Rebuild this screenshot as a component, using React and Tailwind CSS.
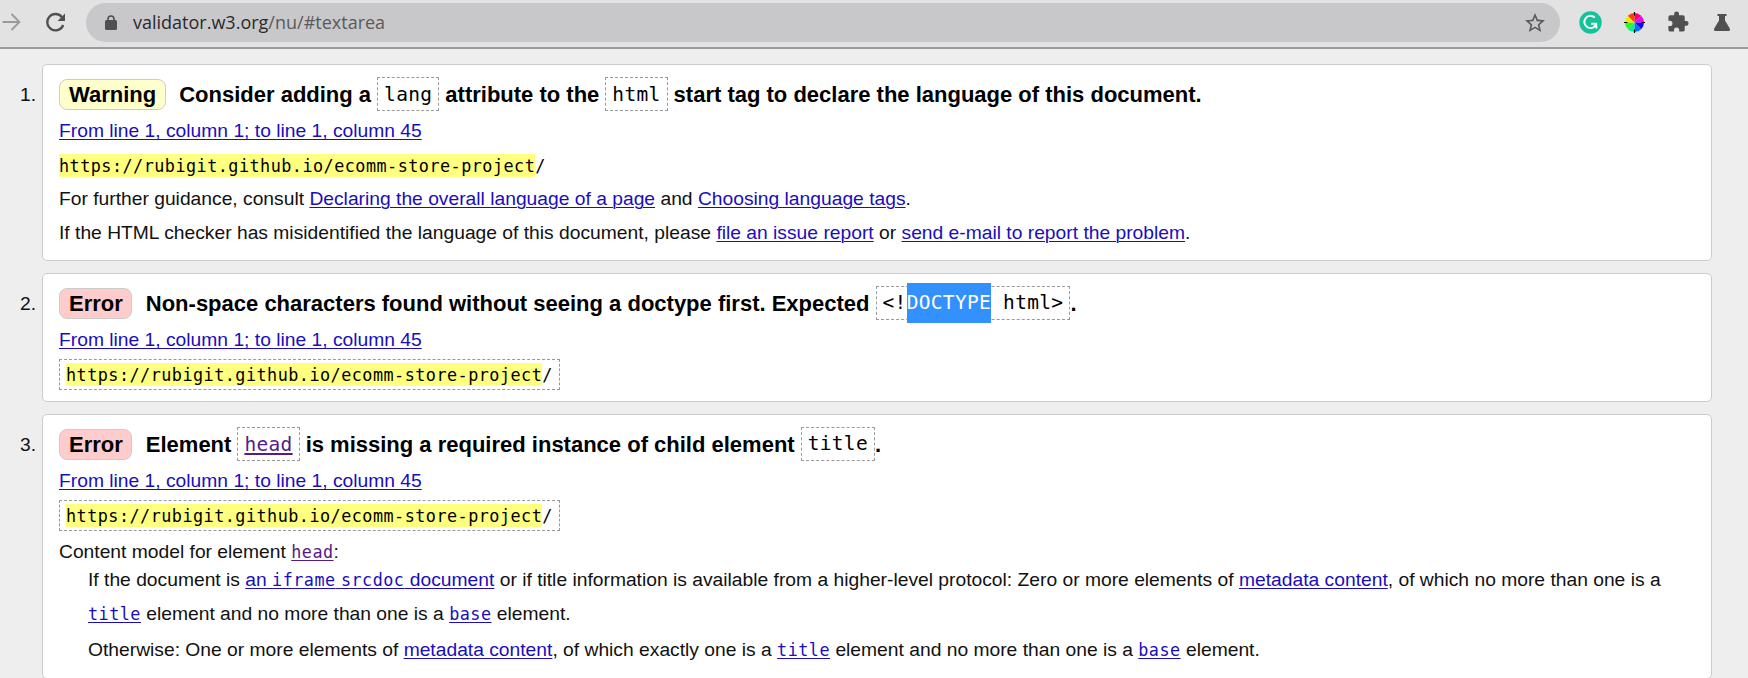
function Link({ children, visited = false, className = "decoration-1" }) {
  return (
    <a
      className={
        "underline underline-offset-[1.5px] " +
        className +
        (visited ? " text-[#551a8b]" : " text-[#1a0dbd]")
      }
    >
      {children}
    </a>
  );
}

function Mono({ children }) {
  return (
    <code className="font-['DejaVu_Sans_Mono',monospace] text-[16.8px] leading-none tracking-[0.48px]">
      {children}
    </code>
  );
}

function HeadCode({ children }) {
  return (
    <code className="inline-flex h-[34px] items-center whitespace-pre border border-dashed border-[#999] px-[6px] pt-px font-['DejaVu_Sans_Mono',monospace] text-[19.5px] font-normal leading-none tracking-[0.32px]">
      {children}
    </code>
  );
}

function Badge({ kind }) {
  return (
    <strong
      className={
        "mr-[13.5px] flex h-[31px] items-center rounded-[8px] border border-[#ccc] pl-[9px] pr-[8.5px] " +
        (kind === "Warning" ? "bg-[#ffffcc]" : "bg-[#ffcccc]")
      }
    >
      {kind}
    </strong>
  );
}

function Heading({ kind, children }) {
  return (
    <div className="flex h-[37px] items-start text-[22px] font-bold leading-[35px] text-black">
      <div className="flex h-[34px] items-center">
        <Badge kind={kind} />
        <div className="flex items-center gap-[6px] whitespace-pre">{children}</div>
      </div>
    </div>
  );
}

function Row({ children, className = "h-[34px]" }) {
  return <div className={"whitespace-nowrap leading-[34px] " + className}>{children}</div>;
}

function Location() {
  return (
    <Row>
      <Link>From line 1, column 1; to line 1, column 45</Link>
    </Row>
  );
}

function Extract({ boxed = false }) {
  return (
    <div className="flex h-[34px] items-center">
      <code
        className={
          "flex items-center font-['DejaVu_Sans_Mono',monospace] text-[16.8px] leading-[23px] tracking-[0.48px] text-black " +
          (boxed ? "h-[31px] border border-dashed border-[#999] px-[6px]" : "")
        }
      >
        <span className="h-[23px] bg-[#ffff80] leading-[24px]">
          https://rubigit.github.io/ecomm-store-project
        </span>
        <span className="h-[23px] leading-[24px]">/</span>
      </code>
    </div>
  );
}

function Card({ n, className, children }) {
  return (
    <li className="flex">
      <span className="w-[42px] pr-[6px] pt-[14px] text-right leading-[34px]">{n}.</span>
      <div
        className={
          "w-[1670px] rounded-[5px] border border-[#ccc] bg-white pl-[16px] pt-[12px] " + className
        }
      >
        {children}
      </div>
    </li>
  );
}

function Toolbar() {
  return (
    <header className="flex h-[49px] items-start border-b-2 border-[#9b9b9b] bg-[#e2e2e2]">
      <div className="flex h-[45px] w-[86px] items-center">
        <svg width="86" height="45" viewBox="0 0 86 45" fill="none">
          <path d="M2.500 22H19.500M11.500 14L19.500 22L11.500 30" stroke="#9a9a9a" strokeWidth="1.800" />
          <path d="M62 17.200A8.200 8.200 0 1 0 63.200 25" stroke="#505050" strokeWidth="2.300" />
          <path d="M65 13.500V21H57.500Z" fill="#505050" />
        </svg>
      </div>
      <div className="mt-[3px] flex h-[39px] w-[1474px] items-center rounded-full bg-[#c8c8ca] pl-[19px]">
        <svg width="12" height="16" viewBox="0 0 12 16">
          <rect x="0" y="5" width="12" height="10" rx="1.500" fill="#505050" />
          <path d="M3 6V4a3 3 0 0 1 6 0V6" fill="none" stroke="#505050" strokeWidth="1.600" />
        </svg>
        <span className="ml-[16px] font-['Open_Sans',sans-serif] text-[18px] text-[#2a2a2a]">
          validator.w3.org<span className="text-[#5a5a5a]">/nu/#textarea</span>
        </span>
        <svg className="ml-auto mr-[13px]" width="24" height="24" viewBox="0 0 24 24">
          <path
            d="M22 9.240l-7.190-.62L12 2 9.190 8.630 2 9.240l5.460 4.730L5.820 21 12 17.270 18.180 21l-1.630-7.030L22 9.240zM12 15.400l-3.760 2.270 1-4.280-3.320-2.880 4.380-.38L12 6.100l1.710 4.040 4.380.38-3.320 2.880 1 4.280L12 15.400z"
            fill="#5a5a5a"
          />
        </svg>
      </div>
      <div className="flex h-[45px] w-[188px] items-center">
        <svg width="188" height="45" viewBox="0 0 188 45">
          <circle cx="30.500" cy="22.500" r="11.200" fill="#15c39a" />
          <path
            d="M34.800 17.600A6.100 6.100 0 1 0 36.300 23.800"
            fill="none"
            stroke="#fff"
            strokeWidth="1.900"
          />
          <path d="M31.200 23.800H36.300V28.600" fill="none" stroke="#fff" strokeWidth="1.900" />
          <g transform="translate(74.500 22.500)">
            <path d="M0 0V-9.500A9.500 9.500 0 0 1 6.700-6.700Z" fill="#ff0070" />
            <path d="M0 0L6.700-6.700A9.500 9.500 0 0 1 9.500 0Z" fill="#f000ff" />
            <path d="M0 0H9.500A9.500 9.500 0 0 1 6.700 6.700Z" fill="#2000ff" />
            <path d="M0 0L6.700 6.700A9.500 9.500 0 0 1 0 9.500Z" fill="#0070ff" />
            <path d="M0 0V9.500A9.500 9.500 0 0 1-6.700 6.700Z" fill="#00f0a0" />
            <path d="M0 0L-6.700 6.700A9.500 9.500 0 0 1-9.500 0Z" fill="#20ff20" />
            <path d="M0 0H-9.500A9.500 9.500 0 0 1-6.700-6.700Z" fill="#e8f000" />
            <path d="M0 0L-6.700-6.700A9.500 9.500 0 0 1 0-9.500Z" fill="#ff4000" />
            <path d="M0-10.500V-7M0 10.500V7M-10.500 0H-7M10.500 0H7" stroke="#000" strokeWidth="1.100" />
          </g>
          <path
            transform="translate(106.500 10.500) scale(.96)"
            d="M20.500 11H19V7c0-1.100-.9-2-2-2h-4V3.500a2.500 2.500 0 0 0-5 0V5H4c-1.100 0-2 .9-2 2v3.800h1.500a2.700 2.700 0 0 1 0 5.400H2V20c0 1.100.9 2 2 2h3.800v-1.500a2.700 2.700 0 0 1 5.400 0V22H17c1.100 0 2-.9 2-2v-4h1.500a2.500 2.500 0 0 0 0-5z"
            fill="#505050"
          />
          <path
            d="M157.500 14H166.500V16H165V20.500L169.800 28.500Q170.500 31 168.500 31H155.500Q153.500 31 154.200 28.500L159 20.500V16H157.500Z"
            fill="#505050"
          />
        </svg>
      </div>
    </header>
  );
}

export default function App() {
  return (
    <div className="h-[678px] w-[1748px] overflow-hidden bg-[#eee] font-['Liberation_Sans',Arial,sans-serif] text-[19.26px] text-[#111]">
      <Toolbar />
      <ol className="flex flex-col gap-[12px] pt-[15px]">
        <Card n={1} className="h-[197px]">
          <Heading kind="Warning">
            <span>Consider adding a</span>
            <HeadCode>lang</HeadCode>
            <span>attribute to the</span>
            <HeadCode>html</HeadCode>
            <span>start tag to declare the language of this document.</span>
          </Heading>
          <Location />
          <Extract />
          <Row>
            For further guidance, consult <Link>Declaring the overall language of a page</Link> and{" "}
            <Link>Choosing language tags</Link>.
          </Row>
          <Row>
            If the HTML checker has misidentified the language of this document, please{" "}
            <Link>file an issue report</Link> or <Link>send e-mail to report the problem</Link>.
          </Row>
        </Card>
        <Card n={2} className="h-[129px]">
          <Heading kind="Error">
            <span>Non-space characters found without seeing a doctype first. Expected</span>
            <span className="flex">
              <HeadCode>
                &lt;!
                <span className="flex h-[40px] items-center bg-[#3390ff] text-white">DOCTYPE</span> html&gt;
              </HeadCode>
              .
            </span>
          </Heading>
          <Location />
          <Extract boxed />
        </Card>
        <Card n={3} className="h-[265px]">
          <Heading kind="Error">
            <span>Element</span>
            <HeadCode>
              <Link visited className="decoration-2">
                head
              </Link>
            </HeadCode>
            <span>is missing a required instance of child element</span>
            <span className="flex">
              <HeadCode>title</HeadCode>.
            </span>
          </Heading>
          <Location />
          <Extract boxed />
          <Row className="mt-[3px] h-[28px]">
            Content model for element{" "}
            <Link visited>
              <Mono>head</Mono>
            </Link>
            :
          </Row>
          <div className="pl-[29px]">
            <Row>
              If the document is{" "}
              <Link>
                an <Mono>iframe</Mono> <Mono>srcdoc</Mono> document
              </Link>{" "}
              or if title information is available from a higher-level protocol: Zero or more elements
              of <Link>metadata content</Link>, of which no more than one is a
            </Row>
            <Row className="h-[36px]">
              <Link>
                <Mono>title</Mono>
              </Link>{" "}
              element and no more than one is a{" "}
              <Link>
                <Mono>base</Mono>
              </Link>{" "}
              element.
            </Row>
            <Row>
              Otherwise: One or more elements of <Link>metadata content</Link>, of which exactly one is a{" "}
              <Link>
                <Mono>title</Mono>
              </Link>{" "}
              element and no more than one is a{" "}
              <Link>
                <Mono>base</Mono>
              </Link>{" "}
              element.
            </Row>
          </div>
        </Card>
      </ol>
    </div>
  );
}
